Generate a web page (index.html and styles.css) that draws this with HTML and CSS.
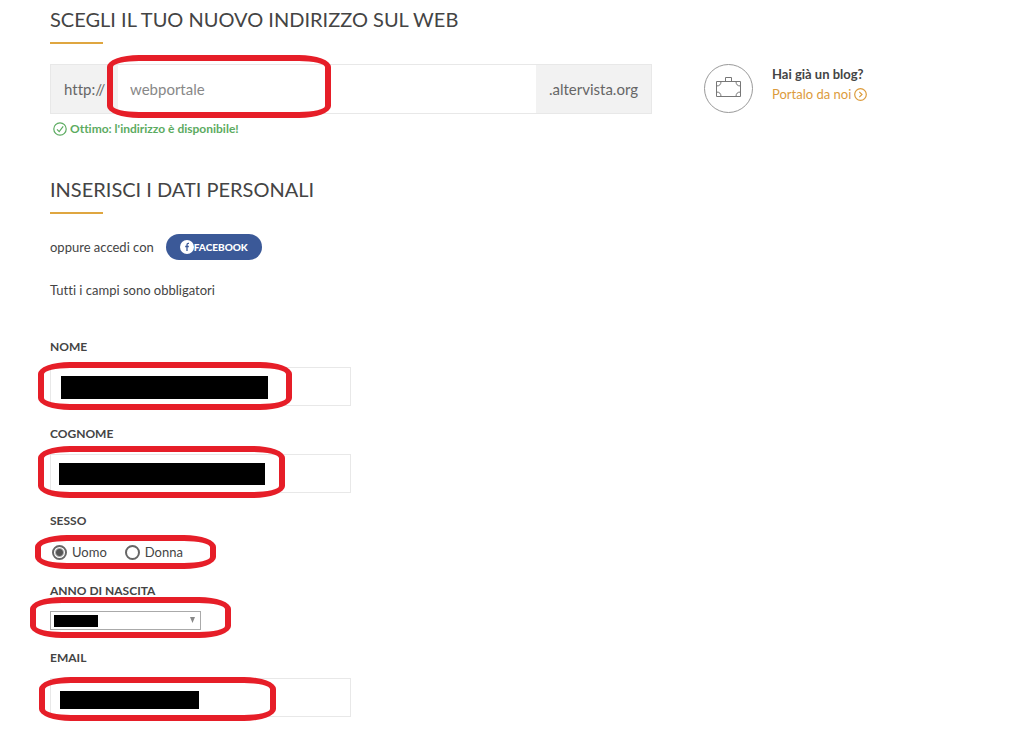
FILE: index.html
```
<!DOCTYPE html>
<html lang="it">
<head>
  <meta charset="UTF-8">
  <meta name="viewport" content="width=device-width, initial-scale=1.0">
  <title>Crea il tuo sito</title>
  <link rel="stylesheet" href="styles.css">
</head>
<body>
  <form class="page">
    <section class="section">
      <h2 class="title"><label for="address">Scegli il tuo nuovo indirizzo sul web</label></h2>
      <div class="address-row">
        <div class="address-col">
          <div class="address">
            <span class="addon addon-start">http://</span>
            <input class="address-input" id="address" type="text" value="webportale">
            <span class="addon">.altervista.org</span>
            <span class="mark mark-address"></span>
          </div>
          <p class="available">
            <svg width="14" height="14" viewBox="0 0 14 14" fill="none" stroke="currentColor" stroke-width="1.2">
              <circle cx="7" cy="7" r="6.2"/>
              <path d="M4 7.4 6.2 9.6 10.2 4.4"/>
            </svg>
            Ottimo: l'indirizzo è disponibile!
          </p>
        </div>
        <div class="blog">
          <svg class="blog-icon" width="49" height="49" viewBox="0 0 49 49" fill="none" stroke="#777">
            <circle cx="24.5" cy="24.5" r="24" stroke="#999"/>
            <path d="M12.5 17.5h24v15h-24zM21.5 17v-3.500h6v3.500"/>
            <path d="M12.500 22c3 0 4.500-1.500 4.500-4.500M36.500 22c-3 0-4.500-1.500-4.500-4.500M12.500 28c3 0 4.500 1.500 4.500 4.500M36.500 28c-3 0-4.500 1.500-4.500 4.500"/>
          </svg>
          <div class="blog-text">
            <strong>Hai già un blog?</strong>
            <a class="blog-link" href="#">Portalo da noi
              <svg width="13" height="13" viewBox="0 0 13 13" fill="none" stroke="currentColor" stroke-width="1.2">
                <circle cx="6.500" cy="6.500" r="5.800"/>
                <path d="M5.300 3.800 8 6.500 5.300 9.200"/>
              </svg>
            </a>
          </div>
        </div>
      </div>
    </section>

    <section class="section">
      <h2 class="title">Inserisci i dati personali</h2>
      <div class="social">
        <span>oppure accedi con</span>
        <button class="facebook" type="button">
          <svg width="14" height="14" viewBox="0 0 14 14">
            <circle cx="7" cy="7" r="7" fill="#fff"/>
            <path d="M9 3.400H8.200Q7 3.400 7 4.700V11M5.200 6.500H8.800" fill="none" stroke="#3b5998" stroke-width="1.300"/>
          </svg>Facebook
        </button>
      </div>
      <p class="note">Tutti i campi sono obbligatori</p>

      <div class="field">
        <label class="label" for="nome">Nome</label>
        <div class="control">
          <input class="input" id="nome" type="text">
          <span class="redacted redacted-nome"></span>
          <span class="mark mark-nome"></span>
        </div>
      </div>

      <div class="field">
        <label class="label" for="cognome">Cognome</label>
        <div class="control">
          <input class="input" id="cognome" type="text">
          <span class="redacted redacted-cognome"></span>
          <span class="mark mark-cognome"></span>
        </div>
      </div>

      <div class="field" role="radiogroup" aria-labelledby="sesso">
        <span class="label" id="sesso">Sesso</span>
        <div class="control radios">
          <label class="radio"><input type="radio" name="sesso" checked>Uomo</label>
          <label class="radio"><input type="radio" name="sesso">Donna</label>
          <span class="mark mark-sesso"></span>
        </div>
      </div>

      <div class="field">
        <label class="label" for="anno">Anno di nascita</label>
        <div class="control">
          <select class="select" id="anno">
            <option></option>
          </select>
          <svg class="arrow" width="5" height="6" viewBox="0 0 5 6"><path d="M0 0h5L2.500 6z" fill="#888"/></svg>
          <span class="redacted redacted-anno"></span>
          <span class="mark mark-anno"></span>
        </div>
      </div>

      <div class="field">
        <label class="label" for="email">Email</label>
        <div class="control">
          <input class="input" id="email" type="email">
          <span class="redacted redacted-email"></span>
          <span class="mark mark-email"></span>
        </div>
      </div>
    </section>
  </form>
</body>
</html>
```
FILE: styles.css
```
* {
  box-sizing: border-box;
}

body {
  margin: 0;
  background-color: #fff;
  color: #444;
  font-family: Lato, sans-serif;
  font-size: 13px;
  font-variant-ligatures: none;
  line-height: 20px;
}

input,
select,
button {
  font-family: inherit;
}

.page {
  padding: 7px 50px 0;
}

.section {
  margin-bottom: 38px;
}

.section:last-child {
  margin-bottom: 0;
}

.title {
  margin: 0 0 20px;
  font-size: 20px;
  font-weight: 400;
  line-height: 24px;
  text-transform: uppercase;
}

.title::after {
  content: "";
  display: block;
  width: 53px;
  height: 2px;
  margin-top: 11px;
  background-color: #dfa640;
}

/* address */
.address-row {
  display: grid;
  grid-template-columns: minmax(0, 602px) auto;
  justify-content: start;
  gap: 52px;
}

.address {
  position: relative;
  display: flex;
  height: 50px;
  border: 1px solid #e8e8e8;
}

.addon {
  display: flex;
  align-items: center;
  padding: 0 13px;
  background-color: #f2f2f2;
  color: #666;
  font-size: 15px;
}

.addon-start {
  width: 67px;
}

.address-input {
  flex: 1;
  min-width: 0;
  padding: 0 12px;
  border: 0;
  outline: none;
  color: #888;
  font-size: 15px;
}

.available {
  display: flex;
  align-items: center;
  gap: 3px;
  margin: 5px 0 0;
  padding-left: 3px;
  color: #5cab61;
  font-size: 12px;
  font-weight: 700;
}

.blog {
  display: flex;
  align-items: flex-start;
  gap: 19px;
}

.blog-text {
  display: flex;
  flex-direction: column;
}

.blog-link {
  display: flex;
  align-items: center;
  gap: 3px;
  color: #dc9b3c;
  text-decoration: none;
}

/* login */
.social {
  display: flex;
  align-items: center;
  gap: 12px;
}

.facebook {
  display: flex;
  align-items: center;
  height: 26px;
  padding: 0 14px;
  border: 0;
  border-radius: 13px;
  background-color: #3b5998;
  color: #fff;
  font-size: 10px;
  font-weight: 900;
  text-transform: uppercase;
  cursor: pointer;
}

.note {
  margin: 20px 0 37px;
}

/* fields */
.field {
  margin-bottom: 18px;
}

.label {
  display: block;
  margin-bottom: 10px;
  font-size: 12px;
  font-weight: 700;
  text-transform: uppercase;
}

.control {
  position: relative;
}

.input {
  display: block;
  width: 100%;
  max-width: 301px;
  height: 39px;
  padding: 0 10px;
  border: 1px solid #e8e8e8;
  outline: none;
}

.radios {
  display: flex;
  gap: 18px;
  height: 22px;
  padding-left: 2px;
}

.radio {
  display: flex;
  align-items: center;
  gap: 5px;
}

.radio input {
  appearance: none;
  width: 15px;
  height: 15px;
  margin: 0;
  border: 2px solid #666;
  border-radius: 50%;
}

.radio input:checked {
  background: radial-gradient(circle, #555 3px, #fff 5px);
}

.select {
  appearance: none;
  display: block;
  width: 151px;
  height: 19px;
  border: 1px solid #aaa;
  border-radius: 0;
  background-color: #fff;
}

.arrow {
  position: absolute;
  top: 6px;
  left: 140px;
  pointer-events: none;
}

/* blacked out values */
.redacted {
  position: absolute;
  background-color: #000;
}

.redacted-nome {
  top: 9px;
  left: 11px;
  width: 207px;
  height: 23px;
}

.redacted-cognome {
  top: 9px;
  left: 9px;
  width: 206px;
  height: 22px;
}

.redacted-anno {
  top: 4px;
  left: 4px;
  width: 44px;
  height: 12px;
}

.redacted-email {
  top: 13px;
  left: 10px;
  width: 139px;
  height: 18px;
}

/* red highlights */
.mark {
  position: absolute;
  border: 6px solid #e61e28;
  border-radius: 32px / 12px;
  pointer-events: none;
}

.mark-address {
  top: -10px;
  left: 56px;
  width: 224px;
  height: 63px;
}

.mark-nome {
  top: -5px;
  left: -12px;
  width: 254px;
  height: 48px;
}

.mark-cognome {
  top: -8px;
  left: -12px;
  width: 247px;
  height: 52px;
}

.mark-sesso {
  top: -6px;
  left: -15px;
  width: 181px;
  height: 34px;
}

.mark-anno {
  top: -14px;
  left: -20px;
  width: 201px;
  height: 41px;
}

.mark-email {
  top: -1px;
  left: -11px;
  width: 237px;
  height: 44px;
}
```
